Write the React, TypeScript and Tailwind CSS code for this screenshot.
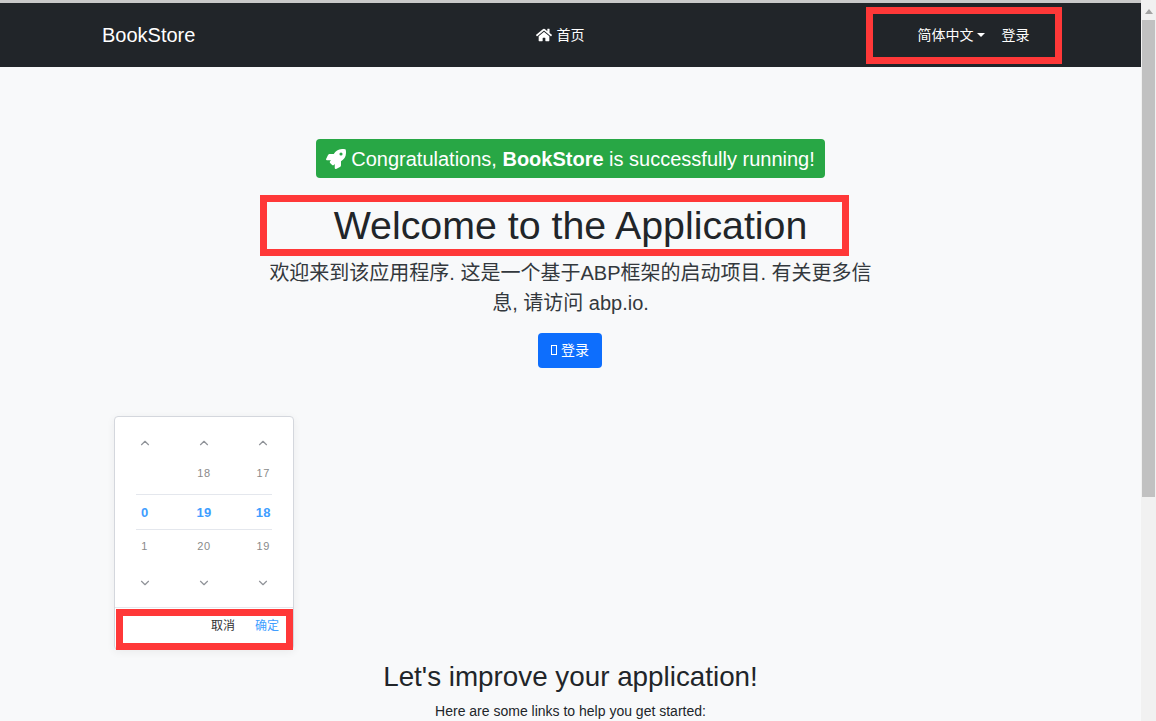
import { FaHome, FaRocket } from "react-icons/fa";
import { ChevronDown, ChevronUp } from "lucide-react";

const FONT = "font-['Liberation_Sans','Noto_Sans_CJK_SC',sans-serif]";

const pickerColumns = [
  { prev: "", current: "0", next: "1" },
  { prev: "18", current: "19", next: "20" },
  { prev: "17", current: "18", next: "19" },
];

function TimePicker() {
  return (
    <div className="absolute left-[114px] top-[416px] flex h-[234px] w-[180px] flex-col rounded-[4px] border border-[#d4d7dd] bg-white shadow-[0_2px_8px_rgba(0,0,0,0.06)]">
      <div className="relative grid h-[190px] grid-cols-3 pt-[19px]">
        <div className="absolute left-[21px] right-[21px] top-[77px] h-[36px] border-y border-[#e4e7ed]" />
        {pickerColumns.map((col, i) => (
          <div key={i} className="flex flex-col items-center">
            <ChevronUp size={14} strokeWidth={2} className="text-[#909399]" />
            <div className="mt-[16px] h-[14px] text-[11px] leading-[14px] tracking-[0.6px] text-[#8a8a8a]">{col.prev}</div>
            <div className="mt-[25px] h-[16px] text-[13px] font-bold leading-[16px] tracking-[0.3px] text-[#409eff]">{col.current}</div>
            <div className="mt-[18px] h-[14px] text-[11px] leading-[14px] tracking-[0.6px] text-[#8a8a8a]">{col.next}</div>
            <ChevronDown size={14} strokeWidth={2} className="mt-[23px] text-[#909399]" />
          </div>
        ))}
      </div>
      <div className="flex h-[42px] justify-end gap-[20px] border-t border-[#e4e7ed] pr-[14px] pt-[10px] text-[12px] leading-[16px]">
        <span className="text-[#303133]">取消</span>
        <span className="text-[#409eff]">确定</span>
      </div>
    </div>
  );
}

function Navbar() {
  return (
    <nav className="h-[64px] bg-[#212529] text-white">
      <div className="mx-auto flex h-full w-[960px] items-center pl-[11.5px] pr-[13px]">
        <span className="mr-[16px] text-[20px]">BookStore</span>
        <span className="mx-auto flex items-center gap-[4px] px-[8px] text-[14px]">
          <FaHome size={16} />
          首页
        </span>
        <div className="flex items-center text-[14px]">
          <span className="flex items-center gap-[4px] px-[8px]">
            简体中文
            <span className="mb-[1px] border-x-[4px] border-t-[4px] border-x-transparent border-t-white" />
          </span>
          <span className="px-[8px]">登录</span>
        </div>
      </div>
    </nav>
  );
}

export default function App() {
  return (
    <div className={`${FONT} flex h-[721px] w-[1156px] overflow-hidden bg-[#f8f9fa]`}>
      <div className="relative flex-1">
        <div className="h-[3px] bg-[#c9c9c9]" />
        <Navbar />
        <main className="flex flex-col items-center pt-[72px] text-[#212529]">
          <div className="flex h-[39px] items-center gap-[5px] rounded-[4px] bg-[#28a745] px-[10.5px] pt-[1px] text-[20px] text-white">
            <FaRocket size={20} />
            <span>
              Congratulations, <b>BookStore</b> is successfully running!
            </span>
          </div>
          <h1 className="mt-[23px] text-[39.35px] leading-[48px]">Welcome to the Application</h1>
          <p className="mt-[9px] w-[620px] text-center text-[20px] leading-[30px] text-[#33383d]">
            欢迎来到该应用程序. 这是一个基于ABP框架的启动项目. 有关更多信息, 请访问 abp.io.
          </p>
          <button className="mr-[1px] mt-[15px] flex h-[35px] w-[64px] items-center justify-center gap-[4px] rounded-[4px] bg-[#0d6efd] pb-[1px] text-[14px] text-white">
            <span className="h-[10px] w-[6px] border border-white" />
            登录
          </button>
          <h2 className="mt-[292px] text-[27.8px] leading-[34px]">Let's improve your application!</h2>
          <p className="mt-[7px] text-[14px] leading-[21px]">Here are some links to help you get started:</p>
        </main>
        <TimePicker />
        <div className="absolute left-[866px] top-[7px] h-[57px] w-[196px] border-[7px] border-[#ff3838]" />
        <div className="absolute left-[260px] top-[195px] h-[61px] w-[589px] border-[7px] border-[#ff3838]" />
        <div className="absolute left-[116px] top-[609px] h-[41px] w-[177px] border-[7px] border-[#ff3838]" />
      </div>
      <div className="flex w-[15px] flex-col items-center bg-[#f1f1f1] pt-[3px]">
        <div className="flex h-[17px] items-center">
          <span className="border-x-[4px] border-b-[5px] border-x-transparent border-b-[#a3a3a3]" />
        </div>
        <div className="h-[477px] w-[13px] bg-[#c1c1c1]" />
      </div>
    </div>
  );
}
